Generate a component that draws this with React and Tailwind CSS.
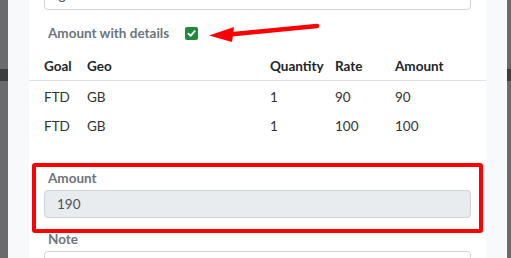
export default function App() {
  const rows = [
    { goal: "FTD", geo: "GB", quantity: 1, rate: 90, amount: 90 },
    { goal: "FTD", geo: "GB", quantity: 1, rate: 100, amount: 100 },
  ];
  const cols = "grid grid-cols-[43px_183px_65px_60px_1fr]";

  return (
    <div
      className="w-[511px] h-[258px] flex overflow-hidden text-[13.5px] text-[#212529]"
      style={{ fontFamily: 'Lato, "Noto Sans", sans-serif' }}
    >
      <div className="w-[8px] bg-[#6b6b6d] flex flex-col">
        <div className="h-[69px]" />
        <div className="h-[12px] bg-[#3d3d3f]" />
      </div>

      <div className="flex-1 bg-[#f8f9fa] px-[21px] flex">
        <div className="flex-1 bg-white flex flex-col">
          <div className="px-[15px]">
            <div className="-mt-[16px] h-[26px] border border-[#ced4da] rounded-[4px] px-[13px] flex items-center text-[#495057]">
              8
            </div>
          </div>

          <div className="mt-[13px] h-[20px] px-[15px] flex items-center">
            <span className="pl-[4px] font-bold text-[#6c757d] leading-[20px]">
              Amount with details
            </span>
            <span className="ml-[16px] w-[13px] h-[13px] rounded-[2px] bg-[#1f8a3a] flex items-center justify-center">
              <svg width="9" height="9" viewBox="0 0 10 10">
                <path
                  d="M1.5 5.2 L4 7.6 L8.6 2.4"
                  fill="none"
                  stroke="white"
                  strokeWidth="2"
                  strokeLinecap="round"
                  strokeLinejoin="round"
                />
              </svg>
            </span>
            <svg width="114" height="24" viewBox="0 0 114 24" className="ml-[9px] mt-[1px]">
              <path d="M22 12.6 L110 4" stroke="#ff0000" strokeWidth="4.5" strokeLinecap="round" />
              <polygon points="2,13.5 27,5 25,20" fill="#ff0000" />
            </svg>
          </div>

          <div className="mt-[10px]">
            <div className={`${cols} h-[28px] items-center font-bold border-b border-[#dee2e6]`}>
              <div className="pl-[15px]">Goal</div>
              <div className="pl-[15px]">Geo</div>
              <div className="pl-[15px]">Quantity</div>
              <div className="pl-[15px]">Rate</div>
              <div className="pl-[15px]">Amount</div>
            </div>
            {rows.map((r, i) => (
              <div key={i} className={`${cols} h-[29px] pt-[6px] leading-[20px] text-[#333]`}>
                <div className="pl-[15px]">{r.goal}</div>
                <div className="pl-[15px]">{r.geo}</div>
                <div className="pl-[15px]">{r.quantity}</div>
                <div className="pl-[15px]">{r.rate}</div>
                <div className="pl-[15px]">{r.amount}</div>
              </div>
            ))}
          </div>

          <div className="mt-[24px] mx-[3px] border-4 border-[#ff0000] rounded-[3px] px-[8px] pt-[1px] pb-[11px]">
            <div className="pl-[4px] font-bold text-[#6c757d] leading-[20px]">Amount</div>
            <div className="mt-[2px] h-[28px] bg-[#e9ecef] border border-[#ced4da] rounded-[4px] px-[12px] flex items-center text-[#495057]">
              190
            </div>
          </div>

          <div className="px-[15px]">
            <div className="pl-[4px] font-bold text-[#6c757d] leading-[12px]">Note</div>
            <div className="mt-[6px] h-[28px] border border-[#ced4da] rounded-[4px]" />
          </div>
        </div>
      </div>

      <div className="w-[4px] bg-[#6b6b6d] flex flex-col">
        <div className="h-[69px]" />
        <div className="h-[12px] bg-[#3d3d3f]" />
      </div>
    </div>
  );
}
